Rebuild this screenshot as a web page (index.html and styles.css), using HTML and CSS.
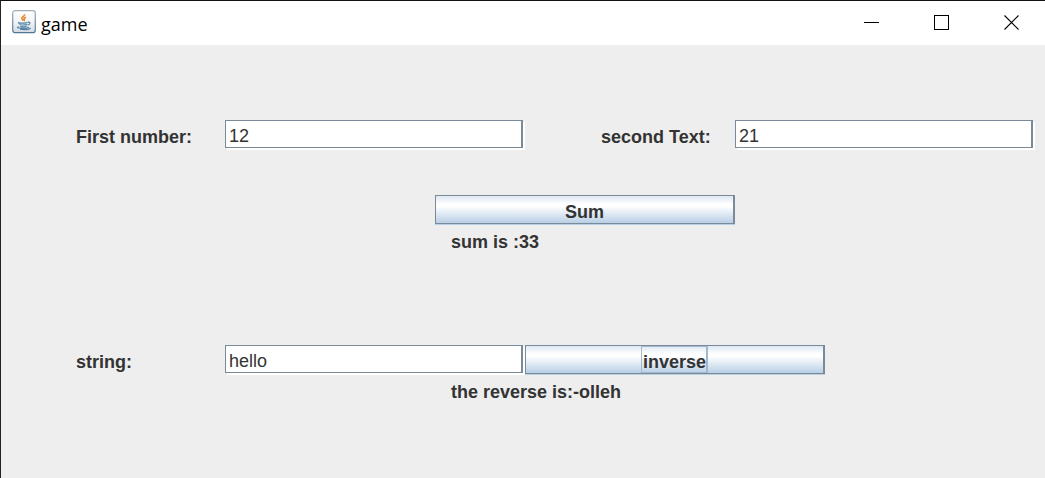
FILE: index.html
```html
<!DOCTYPE html>
<html lang="en">
<head>
<meta charset="utf-8">
<title>game</title>
<link rel="stylesheet" href="styles.css">
</head>
<body>
<main class="window">
  <header class="titlebar">
    <svg class="app-icon" width="24" height="24" viewBox="0 0 24 24" aria-hidden="true">
      <defs>
        <linearGradient id="tile" x1="0" y1="0" x2="0" y2="1"><stop offset="0" stop-color="#fff"/><stop offset=".5" stop-color="#f2f4f6"/><stop offset="1" stop-color="#d3dae1"/></linearGradient>
        <linearGradient id="edge" x1="0" y1="0" x2="0" y2="1"><stop offset="0" stop-color="#a3adb8"/><stop offset="1" stop-color="#4d7894"/></linearGradient>
      </defs>
      <rect x=".7" y=".7" width="22.6" height="22" rx="2.5" fill="url(#tile)" stroke="url(#edge)" stroke-width="1.2"/>
      <path d="M12.600 4.200c.6 2-3 2.600-2.800 4.300.1 1 1.200 1.500 1.400 2.300M14 7.200c-2 .8-2.500 1.500-1.700 2.400.4.500.2.900-.3 1.300" fill="none" stroke="#e8872d" stroke-width="1.600"/>
      <path d="M7.500 12.200c-3 1 1.500 1.400 8 .4M8 14.100c-.8 1 4 1.200 7 .4M8.600 16c-.2 1 3.500 1.200 6 .3M15.800 12.200c3-.6 2.700 2.300-.4 3M6.600 16.800c-4.600 1.400 7 2.300 10.400.4M8 19.200c4 .6 9 .2 10.600-1" fill="none" stroke="#4f81a5" stroke-width="1.200"/>
    </svg>
    <h1 class="title">game</h1>
    <div class="controls">
      <button class="control" type="button" aria-label="Minimize"><svg width="16" height="16" viewBox="0 0 16 16" shape-rendering="crispEdges"><path d="M0 7.500h15" stroke="#000"/></svg></button>
      <button class="control" type="button" aria-label="Maximize"><svg width="16" height="16" viewBox="0 0 16 16" shape-rendering="crispEdges"><path d="M.5.5h14v14H.5z" fill="none" stroke="#000"/></svg></button>
      <button class="control control-close" type="button" aria-label="Close"><svg width="16" height="16" viewBox="0 0 16 16"><path d="M.5.5l14 14M14.500.5l-14 14" stroke="#000" stroke-width="1.100"/></svg></button>
    </div>
  </header>
  <form class="panel">
    <label class="label first-label" for="first">First number:</label>
    <input class="field first-field" id="first" type="text" value="12">
    <label class="label second-label" for="second">second Text:</label>
    <input class="field second-field" id="second" type="text" value="21">
    <button class="button sum-button" type="button">Sum</button>
    <output class="label sum-result" for="first second">sum is :33</output>
    <label class="label string-label" for="string">string:</label>
    <input class="field string-field" id="string" type="text" value="hello">
    <button class="button inverse-button" type="button"><span class="focus">inverse</span></button>
    <output class="label reverse-result" for="string">the reverse is:-olleh</output>
  </form>
</main>
</body>
</html>
```
FILE: styles.css
```css
* {
  box-sizing: border-box;
}

body {
  margin: 0;
  background: #eee;
  color: #333;
  font: 18px/30px "Liberation Sans", Arial, sans-serif;
}

.window {
  min-height: 100vh;
  border-top: 1px solid #111;
  border-left: 1px solid #222;
}

.titlebar {
  display: flex;
  align-items: center;
  height: 44px;
  padding-left: 11px;
  background: #fff;
}

.app-icon {
  flex: none;
  margin-bottom: 2px;
}

.title {
  margin: 0 auto 0 5px;
  padding-top: 1px;
  color: #000;
  font: 18px/24px "Open Sans", "Noto Sans", sans-serif;
}

.controls {
  display: flex;
}

.control {
  display: flex;
  align-items: center;
  justify-content: center;
  width: 70px;
  height: 44px;
  padding: 0;
  border: 0;
  background: transparent;
}

.control-close {
  width: 68px;
  padding-left: 2px;
}

.panel {
  display: grid;
  grid-template-columns: repeat(64, minmax(0, 1fr));
  grid-template-rows: 30px 45px 30px 30px 90px 30px 30px;
  padding: 75px 10px 60px 74px;
}

.label {
  padding: 2px 0 0 1px;
  font-weight: bold;
  white-space: nowrap;
}

.field,
.button {
  color: #333;
  font: 18px/24px "Liberation Sans", Arial, sans-serif;
}

.field {
  width: calc(100% - 2px);
  height: 28px;
  padding: 5px 3px 0;
  border: 1px solid #7a8a99;
  border-right-width: 2px;
  border-radius: 0;
  outline: 0;
  background: #fff;
  box-shadow: 2px 2px #fff;
}

.button {
  display: flex;
  align-items: center;
  justify-content: center;
  width: 100%;
  height: 29px;
  padding: 4px 0 0;
  border: 1px solid #7a8a99;
  border-right-width: 2px;
  background: linear-gradient(#dde8f3, #fff 30%, #fff 38%, #b8cfe5);
  box-shadow: 0 1px #b8cfe5;
  font-weight: bold;
}

.focus {
  height: 27px;
  margin-top: -4px;
  padding: 3px 0 0 1px;
  border: 1px solid #a3b8cc;
  border-right-width: 2px;
}

.first-label { grid-area: 1 / 1 / 2 / 11; }
.first-field { grid-area: 1 / 11 / 2 / 31; }
.second-label { grid-area: 1 / 36 / 2 / 45; }
.second-field { grid-area: 1 / 45 / 2 / 65; }
.sum-button { grid-area: 3 / 25 / 4 / 45; }
.sum-result { grid-area: 4 / 26 / 5 / 46; }
.string-label { grid-area: 6 / 1 / 7 / 11; }
.string-field { grid-area: 6 / 11 / 7 / 31; }
.inverse-button { grid-area: 6 / 31 / 7 / 51; }
.reverse-result { grid-area: 7 / 26 / 8 / 46; }
```
